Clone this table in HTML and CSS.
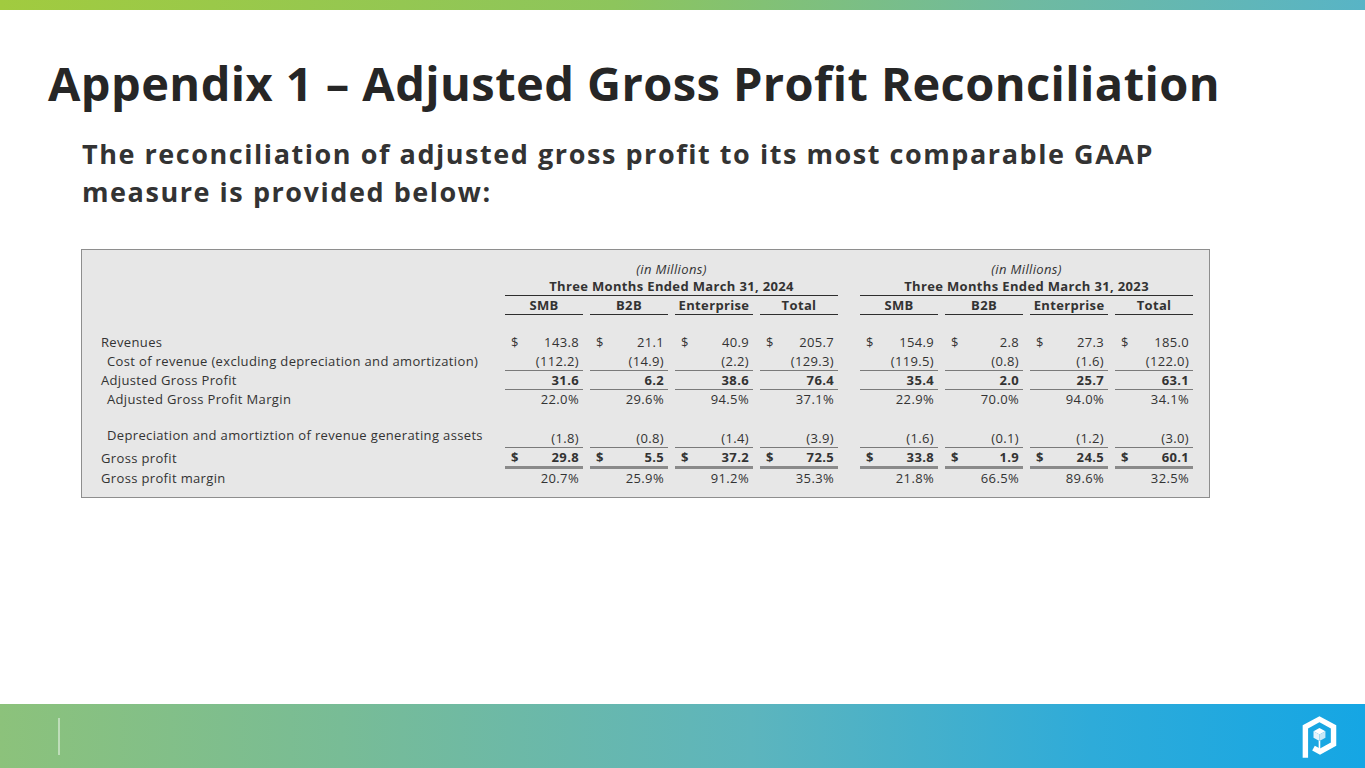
FILE: index.html
```html
<!DOCTYPE html>
<html>
<head>
<meta charset="utf-8">
<link rel="stylesheet" href="styles.css">
</head>
<body>
<div class="slide">
  <div class="topbar"></div>
  <main class="content">
    <h1 class="title">Appendix 1 – Adjusted Gross Profit Reconciliation</h1>
    <p class="subtitle">The reconciliation of adjusted gross profit to its most comparable GAAP measure is provided below:</p>
    <div class="tablebox">
      <table class="recon">
        <colgroup>
          <col class="c-label">
          <col class="c-val"><col class="c-val"><col class="c-val"><col class="c-val">
          <col class="c-gap">
          <col class="c-val"><col class="c-val"><col class="c-val"><col class="c-val">
        </colgroup>
        <tr class="r-units">
          <td></td>
          <td colspan="4" class="center italic">(in Millions)</td>
          <td></td>
          <td colspan="4" class="center italic">(in Millions)</td>
        </tr>
        <tr class="r-period">
          <td></td>
          <td colspan="4" class="center bold line-dark">Three Months Ended March 31, 2024</td>
          <td></td>
          <td colspan="4" class="center bold line-dark">Three Months Ended March 31, 2023</td>
        </tr>
        <tr class="r-head">
          <td></td>
          <td class="center bold line-dark">SMB</td>
          <td class="center bold line-dark">B2B</td>
          <td class="center bold line-dark">Enterprise</td>
          <td class="center bold line-dark">Total</td>
          <td></td>
          <td class="center bold line-dark">SMB</td>
          <td class="center bold line-dark">B2B</td>
          <td class="center bold line-dark">Enterprise</td>
          <td class="center bold line-dark">Total</td>
        </tr>
        <tr class="r-blank"><td colspan="10"></td></tr>
        <tr class="r-data">
          <td class="label">Revenues</td>
          <td><span class="cur">$</span><span class="num">143.8</span></td>
          <td><span class="cur">$</span><span class="num">21.1</span></td>
          <td><span class="cur">$</span><span class="num">40.9</span></td>
          <td><span class="cur">$</span><span class="num">205.7</span></td>
          <td></td>
          <td><span class="cur">$</span><span class="num">154.9</span></td>
          <td><span class="cur">$</span><span class="num">2.8</span></td>
          <td><span class="cur">$</span><span class="num">27.3</span></td>
          <td><span class="cur">$</span><span class="num">185.0</span></td>
        </tr>
        <tr class="r-line">
          <td class="label indent">Cost of revenue (excluding depreciation and amortization)</td>
          <td class="line"><span class="num">(112.2)</span></td>
          <td class="line"><span class="num">(14.9)</span></td>
          <td class="line"><span class="num">(2.2)</span></td>
          <td class="line"><span class="num">(129.3)</span></td>
          <td></td>
          <td class="line"><span class="num">(119.5)</span></td>
          <td class="line"><span class="num">(0.8)</span></td>
          <td class="line"><span class="num">(1.6)</span></td>
          <td class="line"><span class="num">(122.0)</span></td>
        </tr>
        <tr class="r-line">
          <td class="label">Adjusted Gross Profit</td>
          <td class="line bold"><span class="num">31.6</span></td>
          <td class="line bold"><span class="num">6.2</span></td>
          <td class="line bold"><span class="num">38.6</span></td>
          <td class="line bold"><span class="num">76.4</span></td>
          <td></td>
          <td class="line bold"><span class="num">35.4</span></td>
          <td class="line bold"><span class="num">2.0</span></td>
          <td class="line bold"><span class="num">25.7</span></td>
          <td class="line bold"><span class="num">63.1</span></td>
        </tr>
        <tr class="r-data">
          <td class="label indent">Adjusted Gross Profit Margin</td>
          <td><span class="num">22.0%</span></td>
          <td><span class="num">29.6%</span></td>
          <td><span class="num">94.5%</span></td>
          <td><span class="num">37.1%</span></td>
          <td></td>
          <td><span class="num">22.9%</span></td>
          <td><span class="num">70.0%</span></td>
          <td><span class="num">94.0%</span></td>
          <td><span class="num">34.1%</span></td>
        </tr>
        <tr class="r-blank2"><td colspan="10"></td></tr>
        <tr class="r-dep">
          <td class="label indent">Depreciation and amortiztion of revenue generating assets</td>
          <td class="line"><span class="num">(1.8)</span></td>
          <td class="line"><span class="num">(0.8)</span></td>
          <td class="line"><span class="num">(1.4)</span></td>
          <td class="line"><span class="num">(3.9)</span></td>
          <td></td>
          <td class="line"><span class="num">(1.6)</span></td>
          <td class="line"><span class="num">(0.1)</span></td>
          <td class="line"><span class="num">(1.2)</span></td>
          <td class="line"><span class="num">(3.0)</span></td>
        </tr>
        <tr class="r-line">
          <td class="label">Gross profit</td>
          <td class="dline bold"><span class="cur">$</span><span class="num">29.8</span></td>
          <td class="dline bold"><span class="cur">$</span><span class="num">5.5</span></td>
          <td class="dline bold"><span class="cur">$</span><span class="num">37.2</span></td>
          <td class="dline bold"><span class="cur">$</span><span class="num">72.5</span></td>
          <td></td>
          <td class="dline bold"><span class="cur">$</span><span class="num">33.8</span></td>
          <td class="dline bold"><span class="cur">$</span><span class="num">1.9</span></td>
          <td class="dline bold"><span class="cur">$</span><span class="num">24.5</span></td>
          <td class="dline bold"><span class="cur">$</span><span class="num">60.1</span></td>
        </tr>
        <tr class="r-last">
          <td class="label">Gross profit margin</td>
          <td><span class="num">20.7%</span></td>
          <td><span class="num">25.9%</span></td>
          <td><span class="num">91.2%</span></td>
          <td><span class="num">35.3%</span></td>
          <td></td>
          <td><span class="num">21.8%</span></td>
          <td><span class="num">66.5%</span></td>
          <td><span class="num">89.6%</span></td>
          <td><span class="num">32.5%</span></td>
        </tr>
      </table>
    </div>
  </main>
  <footer class="footer">
    <div class="footer-rule"></div>
    <svg class="logo" viewBox="0 0 48 48" width="52" height="52" aria-label="logo">
      <path d="M10.5 44 V15.5 L23.5 8.5 L36.5 15.5 V31.5 L24 38.5 L18 35.2" fill="none" stroke="#ffffff" stroke-width="5" stroke-linejoin="miter"/>
      <path d="M23.5 16.5 L29 19.5 L23.5 22.5 L18 19.5 Z" fill="#ffffff"/>
      <path d="M18 19.5 L23.5 22.5 V28.5 L18 25.5 Z" fill="#e6f4fb"/>
      <path d="M29 19.5 L23.5 22.5 V28.5 L29 25.5 Z" fill="#c9e8f6"/>
      <path d="M23.5 28.5 V36" stroke="#ffffff" stroke-width="1.5"/>
    </svg>
  </footer>
</div>
</body>
</html>
```

FILE: styles.css
```css
html, body {
  margin: 0;
  padding: 0;
  background: #ffffff;
}

.slide {
  width: 1365px;
  height: 768px;
  display: flex;
  flex-direction: column;
  overflow: hidden;
  font-family: "Open Sans", "Liberation Sans", sans-serif;
  color: #333333;
}

.topbar {
  height: 10px;
  flex: none;
  background: linear-gradient(90deg, #a1cb3f 0%, #8dc55c 45%, #6fbaa0 75%, #58b4c6 100%);
}

.content {
  flex: 1;
  display: flex;
  flex-direction: column;
}

.title {
  margin: 43px 0 0 48px;
  font-size: 47px;
  line-height: 60px;
  font-weight: 700;
  color: #262626;
  letter-spacing: 0.42px;
}

.subtitle {
  margin: 22px 0 0 82px;
  width: 1110px;
  font-size: 27px;
  line-height: 38px;
  font-weight: 700;
  color: #333333;
  letter-spacing: 1.55px;
}

.tablebox {
  margin: 38px 0 0 81px;
  width: 1115px;
  padding: 11px 0 10px 12px;
  background: #e7e7e7;
  border: 1px solid #8e8e8e;
}

.recon {
  border-collapse: separate;
  border-spacing: 7px 0;
  table-layout: fixed;
  font-size: 13px;
  line-height: 17px;
  letter-spacing: 0.35px;
  color: #333333;
  width: 1106px;
}

.c-label { width: 397px; }
.c-val { width: 78px; }
.c-gap { width: 8px; }

.recon td {
  padding: 0;
  white-space: nowrap;
}

.r-units td { height: 17px; }
.r-period td { height: 17px; }
.r-head td { height: 18px; }
.r-blank td { height: 18px; }
.r-data td { height: 19px; }
.r-line td { height: 18px; }
.r-last td { height: 18px; }
.r-blank2 td { height: 18px; }
.r-dep td { height: 20px; vertical-align: bottom; padding-bottom: 0; }
.r-dep td.label { vertical-align: top; padding-top: 0; }

.center { text-align: center; }
.italic { font-style: italic; }
.bold { font-weight: 700; }

.line-dark { border-bottom: 1px solid #2e2e2e; }
.line { border-bottom: 1px solid #7a7a7a; }
.dline { border-bottom: 3px solid #8a8a8a; }

.label { text-align: left; }
.indent { padding-left: 6px !important; }

.recon td .cur {
  float: left;
  padding-left: 6px;
}

.recon td .num {
  float: right;
  padding-right: 4px;
}

.footer {
  height: 64px;
  flex: none;
  display: flex;
  align-items: center;
  justify-content: space-between;
  padding: 0 19px 0 58px;
  background: linear-gradient(90deg, #8cc27b 0%, #78bc96 25%, #5db5bd 55%, #2eabd9 80%, #15a6e4 100%);
}

.footer-rule {
  width: 2px;
  height: 37px;
  background: rgba(255, 255, 255, 0.45);
}

.logo {
  display: block;
}
```
